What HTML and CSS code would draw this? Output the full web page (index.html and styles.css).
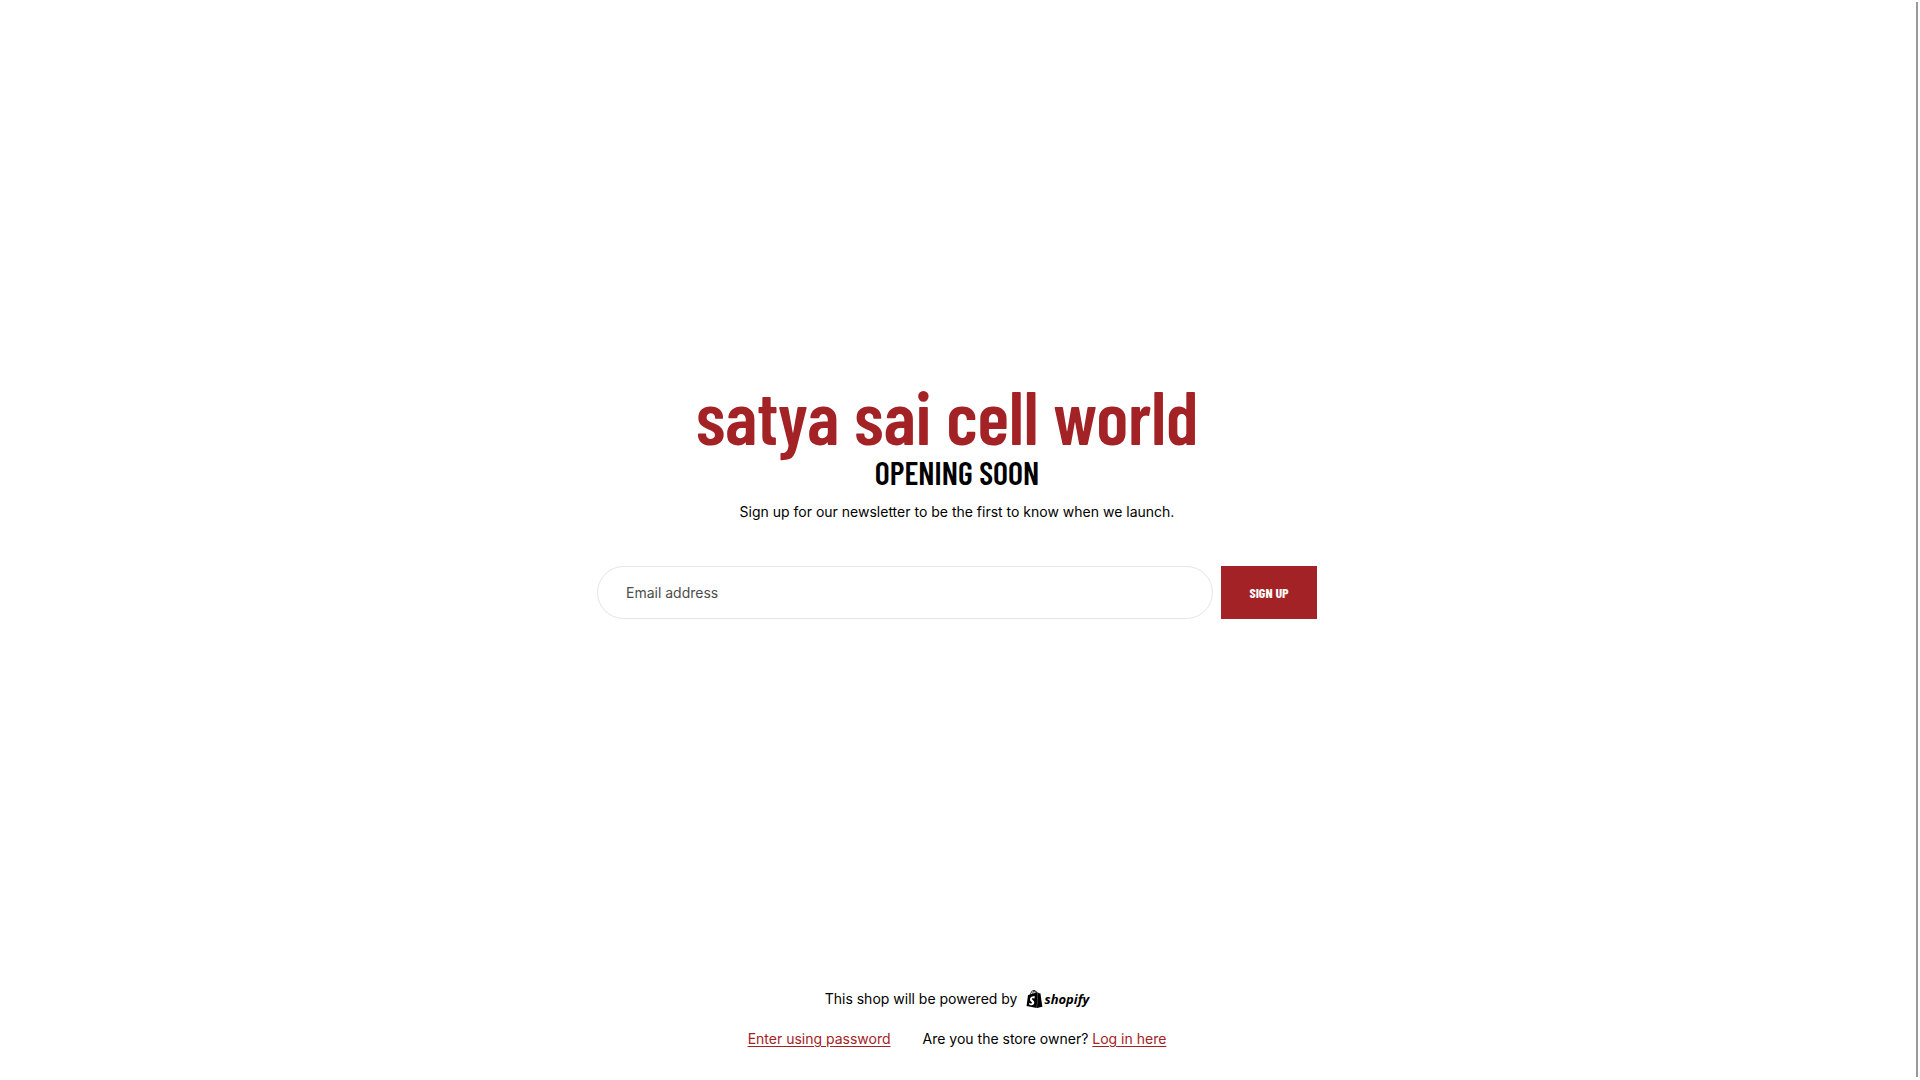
FILE: index.html
```
<!DOCTYPE html>
<html lang="en">

<head>
    <meta charset="UTF-8">
    <meta name="viewport" content="width=device-width, initial-scale=1.0">
    <title>satya sai cell world</title>
    <link rel="stylesheet" href="styles.css">
</head>

<body>
    <div class="page">
        <main class="main">
            <h1 class="shop-name">satya sai cell world</h1>
            <h2 class="title">Opening soon</h2>
            <p class="text">Sign up for our newsletter to be the first to know when we launch.</p>
            <form class="newsletter">
                <input class="email" type="email" placeholder="Email address" aria-label="Email address">
                <button class="submit" type="submit">Sign up</button>
            </form>
        </main>
        <footer class="footer">
            <div class="powered">
                <span>This shop will be powered by</span>
                <a class="logo" href="#" aria-label="Shopify">
                    <svg class="bag" viewBox="1 0 22 24" width="17" height="18">
                        <path d="M15.337 23.979l7.216-1.561s-2.604-17.613-2.625-17.73c-.018-.116-.114-.192-.211-.192s-1.929-.136-1.929-.136-1.275-1.274-1.439-1.411c-.045-.037-.075-.057-.121-.074l-.914 21.104h.023zM11.71 11.305s-.81-.424-1.774-.424c-1.447 0-1.504.906-1.504 1.141 0 1.232 3.24 1.715 3.24 4.629 0 2.295-1.44 3.76-3.406 3.76-2.354 0-3.54-1.465-3.54-1.465l.646-2.086s1.245 1.066 2.28 1.066c.675 0 .975-.545.975-.932 0-1.619-2.654-1.694-2.654-4.359-.034-2.237 1.571-4.416 4.827-4.416 1.257 0 1.875.361 1.875.361l-.945 2.715-.02.01zM11.17.83c.136 0 .271.038.405.135-.984.465-2.064 1.639-2.508 3.992-.656.213-1.293.405-1.889.578C7.697 3.75 8.951.84 11.17.84V.83zm1.235 2.949v.135c-.754.232-1.583.484-2.394.736.466-1.777 1.333-2.645 2.085-2.971.193.501.309 1.176.309 2.1zm.539-2.234c.694.074 1.141.867 1.429 1.755-.349.114-.735.231-1.158.366v-.252c0-.752-.096-1.371-.271-1.871v.002zm2.992 1.289c-.02 0-.06.021-.078.021s-.289.075-.714.21c-.423-1.233-1.176-2.37-2.508-2.37h-.115C12.135.209 11.669 0 11.265 0 8.159 0 6.675 3.877 6.21 5.846c-1.194.365-2.063.636-2.16.674-.675.213-.694.232-.772.87-.075.462-1.83 14.063-1.83 14.063L15.009 24l.927-21.166z" />
                    </svg>
                    <span class="logo-text">shopify</span>
                </a>
            </div>
            <div class="links">
                <a class="link" href="#">Enter using password</a>
                <span class="owner">Are you the store owner? <a class="link" href="#">Log in here</a></span>
            </div>
        </footer>
    </div>
    <div class="scrollbar"></div>
</body>

</html>
```
FILE: styles.css
```
* {
    box-sizing: border-box;
}

body {
    margin: 0;
    padding-right: 6px;
    background: #fff;
    color: #000;
    font: 14px/24px Inter, sans-serif;
}

.page {
    min-height: 100vh;
    display: flex;
    flex-direction: column;
}

.main {
    flex: 1;
    display: flex;
    flex-direction: column;
    justify-content: center;
    align-items: center;
    padding-top: 8px;
}

.shop-name,
.title,
.submit {
    font-family: "Barlow Condensed", "Roboto Condensed", sans-serif;
}

.shop-name {
    margin: 0;
    padding-right: 20px;
    color: #a32225;
    font-size: 74px;
    font-weight: 600;
    line-height: 80px;
}

.title {
    margin: 0;
    font-size: 32px;
    line-height: 32px;
    font-weight: 600;
    text-transform: uppercase;
}

.text {
    margin: 12px 0 42px;
}

.newsletter {
    display: flex;
    gap: 8px;
    width: 100%;
    max-width: 720px;
}

.email {
    flex: 1;
    height: 53px;
    padding: 0 28px;
    border: 1px solid #e5e5e5;
    border-radius: 27px;
    font: inherit;
}

.email::placeholder {
    color: #4d4d4d;
}

.submit {
    width: 96px;
    border: 0;
    background: #a32225;
    color: #fff;
    font-size: 14px;
    font-weight: 700;
    text-transform: uppercase;
}

.footer {
    display: flex;
    flex-direction: column;
    align-items: center;
    gap: 16px;
    padding-bottom: 29px;
}

.powered,
.logo {
    display: flex;
    align-items: center;
}

.powered {
    gap: 8px;
}

.logo {
    color: #000;
    text-decoration: none;
    gap: 2px;
}

.logo-text {
    font: italic 700 13px/18px "Open Sans", sans-serif;
}

.links {
    display: flex;
    gap: 32px;
}

.link {
    color: #a32225;
    text-underline-offset: 2px;
}

.scrollbar {
    position: fixed;
    top: 2px;
    right: 2px;
    bottom: 3px;
    width: 2px;
    background: #999;
}
```
